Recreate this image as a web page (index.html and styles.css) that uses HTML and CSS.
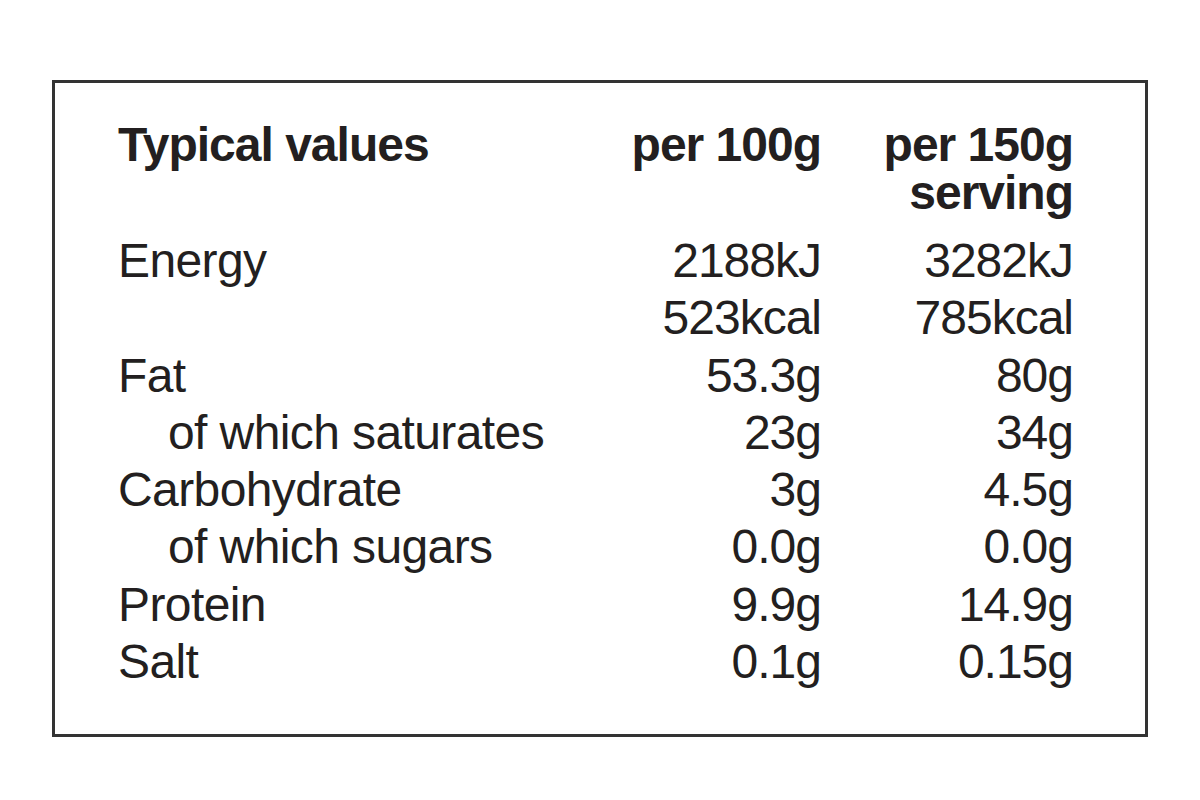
FILE: index.html
```html
<!DOCTYPE html>
<html lang="en">
<head>
<meta charset="utf-8">
<title>Nutrition information</title>
<link rel="stylesheet" href="styles.css">
</head>
<body>
<div class="label">
  <div class="grid head">
    <div class="name">Typical values</div>
    <div class="val">per 100g</div>
    <div class="val">per 150g<br>serving</div>
  </div>
  <div class="grid body">
    <div class="name">Energy</div><div class="val">2188kJ</div><div class="val">3282kJ</div>
    <div class="name"></div><div class="val">523kcal</div><div class="val">785kcal</div>
    <div class="name">Fat</div><div class="val">53.3g</div><div class="val">80g</div>
    <div class="name sub">of which saturates</div><div class="val">23g</div><div class="val">34g</div>
    <div class="name">Carbohydrate</div><div class="val">3g</div><div class="val">4.5g</div>
    <div class="name sub">of which sugars</div><div class="val">0.0g</div><div class="val">0.0g</div>
    <div class="name">Protein</div><div class="val">9.9g</div><div class="val">14.9g</div>
    <div class="name">Salt</div><div class="val">0.1g</div><div class="val">0.15g</div>
  </div>
</div>
</body>
</html>
```

FILE: styles.css
```css
html, body {
  margin: 0;
  padding: 0;
  background: #ffffff;
}
body {
  padding: 80px 52px 0 52px;
  font-family: "Liberation Sans", Arial, Helvetica, sans-serif;
  color: #231f20;
}
.label {
  box-sizing: border-box;
  width: 1096px;
  height: 657px;
  border: 3px solid #333333;
  padding: 38px 73px 0 63px;
}
.grid {
  display: grid;
  grid-template-columns: 1fr 200px 252px;
  font-size: 48px;
  letter-spacing: -1px;
}
.head {
  font-weight: bold;
  line-height: 48px;
}
.body {
  margin-top: 15px;
  line-height: 57.3px;
}
.body .name {
  letter-spacing: -0.6px;
}
.val {
  text-align: right;
  margin-right: -1px;
}
.sub {
  padding-left: 50px;
}
```
